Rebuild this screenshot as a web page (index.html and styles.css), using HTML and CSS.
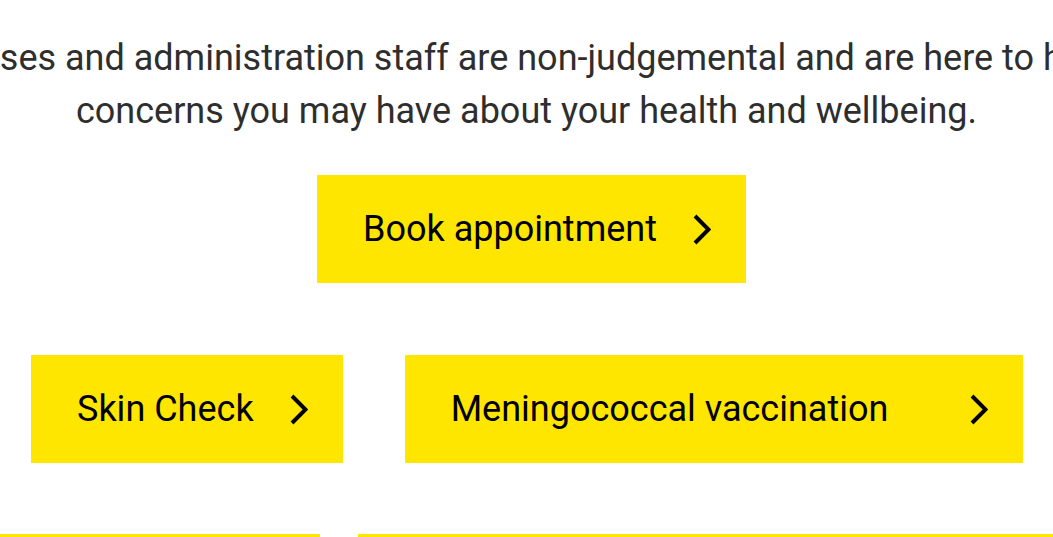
FILE: index.html
```html
<!DOCTYPE html>
<html lang="en">
<head>
<meta charset="utf-8">
<title>Health Service</title>
<link rel="stylesheet" href="styles.css">
</head>
<body>
<main class="intro">
  <div class="lead-wrap">
    <p class="lead">Our GPs, nurses and administration staff are non-judgemental and are here to help with any<br>concerns you may have about your health and wellbeing.</p>
  </div>
  <div class="cta-row">
    <a class="btn" href="#">Book appointment
      <svg class="chev" viewBox="0 0 18 31" aria-hidden="true"><polyline points="2,2 15.5,15.5 2,29"/></svg>
    </a>
  </div>
  <div class="services">
    <a class="btn" href="#">Skin Check
      <svg class="chev" viewBox="0 0 18 31" aria-hidden="true"><polyline points="2,2 15.5,15.5 2,29"/></svg>
    </a>
    <a class="btn btn-wide" href="#">Meningococcal vaccination
      <svg class="chev" viewBox="0 0 18 31" aria-hidden="true"><polyline points="2,2 15.5,15.5 2,29"/></svg>
    </a>
  </div>
  <div class="cards">
    <div class="card card-narrow"></div>
    <div class="card card-wide"></div>
  </div>
</main>
</body>
</html>
```

FILE: styles.css
```css
html, body {
  margin: 0;
  padding: 0;
  background: #fff;
  overflow: hidden;
}
body {
  width: 1053px;
  height: 537px;
  font-family: Roboto, "Noto Sans", sans-serif;
}
.intro {
  display: flex;
  flex-direction: column;
}
.lead-wrap {
  display: flex;
  justify-content: center;
  padding-top: 32px;
}
.lead {
  flex: none;
  margin: 0;
  width: 1500px;
  text-align: center;
  font-size: 36px;
  line-height: 53px;
  color: #2e2e2e;
}
.cta-row {
  display: flex;
  justify-content: center;
  padding-left: 10px;
  margin-top: 37px;
}
.btn {
  display: flex;
  align-items: center;
  gap: 36px;
  height: 108px;
  box-sizing: border-box;
  padding: 0 35px 0 46px;
  background: #ffe600;
  color: #000;
  text-decoration: none;
  font-size: 36px;
}
.chev {
  width: 18px;
  height: 31px;
  flex: none;
}
.chev polyline {
  fill: none;
  stroke: #000;
  stroke-width: 4;
}
.services {
  display: flex;
  gap: 62px;
  padding: 0 30px 0 31px;
  margin-top: 72px;
}
.btn-wide {
  flex: 1;
  justify-content: space-between;
}
.cards {
  display: flex;
  gap: 38px;
  margin-top: 71px;
}
.card {
  height: 40px;
  border-top: 3px solid #ffe600;
}
.card-narrow {
  width: 320px;
}
.card-wide {
  flex: 1;
}
```
